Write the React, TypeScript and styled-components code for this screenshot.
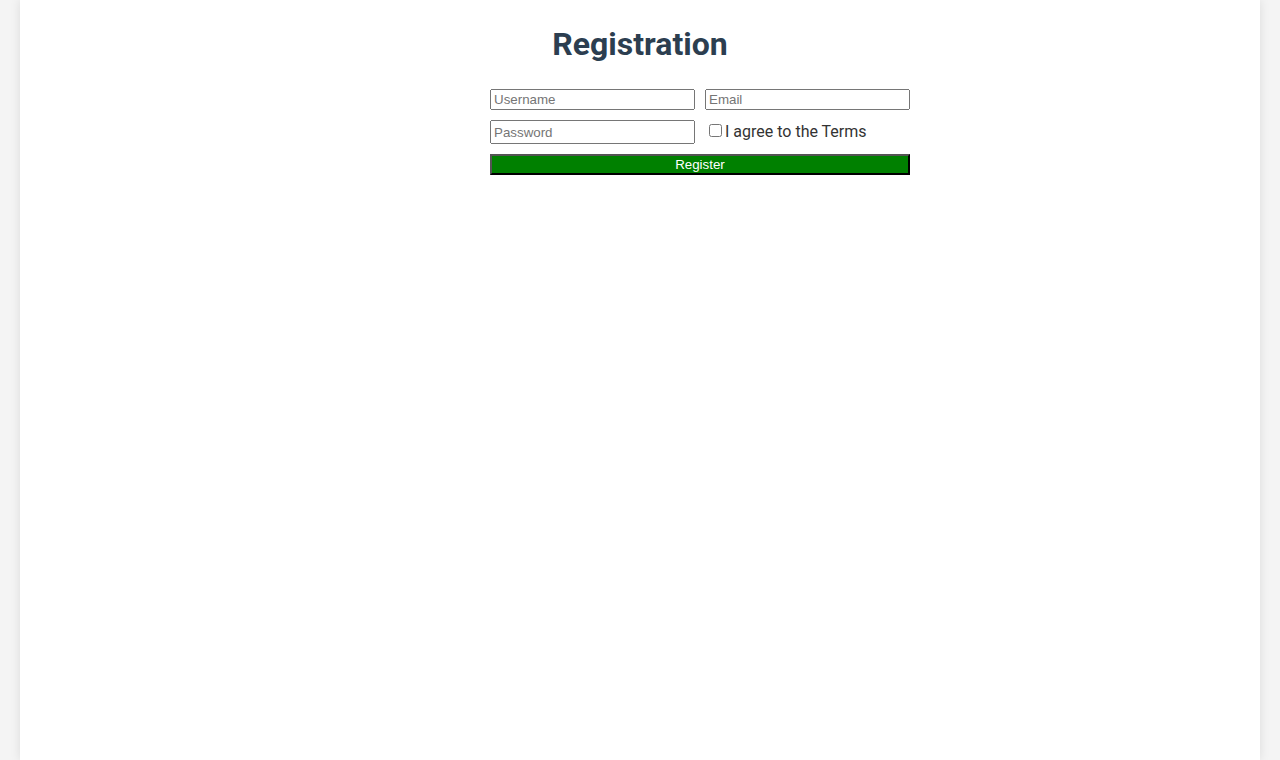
import * as React from 'react';
import styled, { createGlobalStyle } from 'styled-components';

const GlobalStyle = createGlobalStyle`
    body {
        margin: 0;
        background: #f4f4f4;
        font-family: Roboto, "Liberation Sans", sans-serif;
        line-height: 1.5;
        color: #333;
    }
`;

const StyledPage: any = styled.div`
    max-width: 1240px;
    min-height: 100vh;
    margin: 0 auto;
    padding: 20px;
    box-sizing: border-box;
    background: #fff;
    box-shadow: 0 0 10px rgba(0, 0, 0, 0.1);
`;

const StyledHeader: any = styled.h1`
    margin: 0 0 21px;
    text-align: center;
    font-size: 32px;
    font-weight: 700;
    color: #2c3e50;
`;

const StyledFormWrap: any = styled.div`
    display: flex;
    justify-content: center;
    padding-left: 120px;
`;

const StyledForm: any = styled.form`
    width: 420px;
    display: grid;
    grid-template-columns: 1fr 1fr;
    gap: 10px;
`;

const StyledInput: any = styled.input`
    min-width: 0;
`;

const StyledLabel: any = styled.label`
    font-size: 16px;
`;

const StyledButton: any = styled.button`
    grid-column: 1 / span 2;
    background: green;
    color: #fff;
`;

const App: React.FunctionComponent = () => {
    return (
        <StyledPage>
            <GlobalStyle />
            <StyledHeader>Registration</StyledHeader>
            <StyledFormWrap>
                <StyledForm onSubmit={(e: any) => e.preventDefault()}>
                    <StyledInput type="text" placeholder="Username" />
                    <StyledInput type="email" placeholder="Email" />
                    <StyledInput type="password" placeholder="Password" />
                    <StyledLabel>
                        <input type="checkbox" />I agree to the Terms
                    </StyledLabel>
                    <StyledButton type="submit">Register</StyledButton>
                </StyledForm>
            </StyledFormWrap>
        </StyledPage>
    )
};

export default App;
